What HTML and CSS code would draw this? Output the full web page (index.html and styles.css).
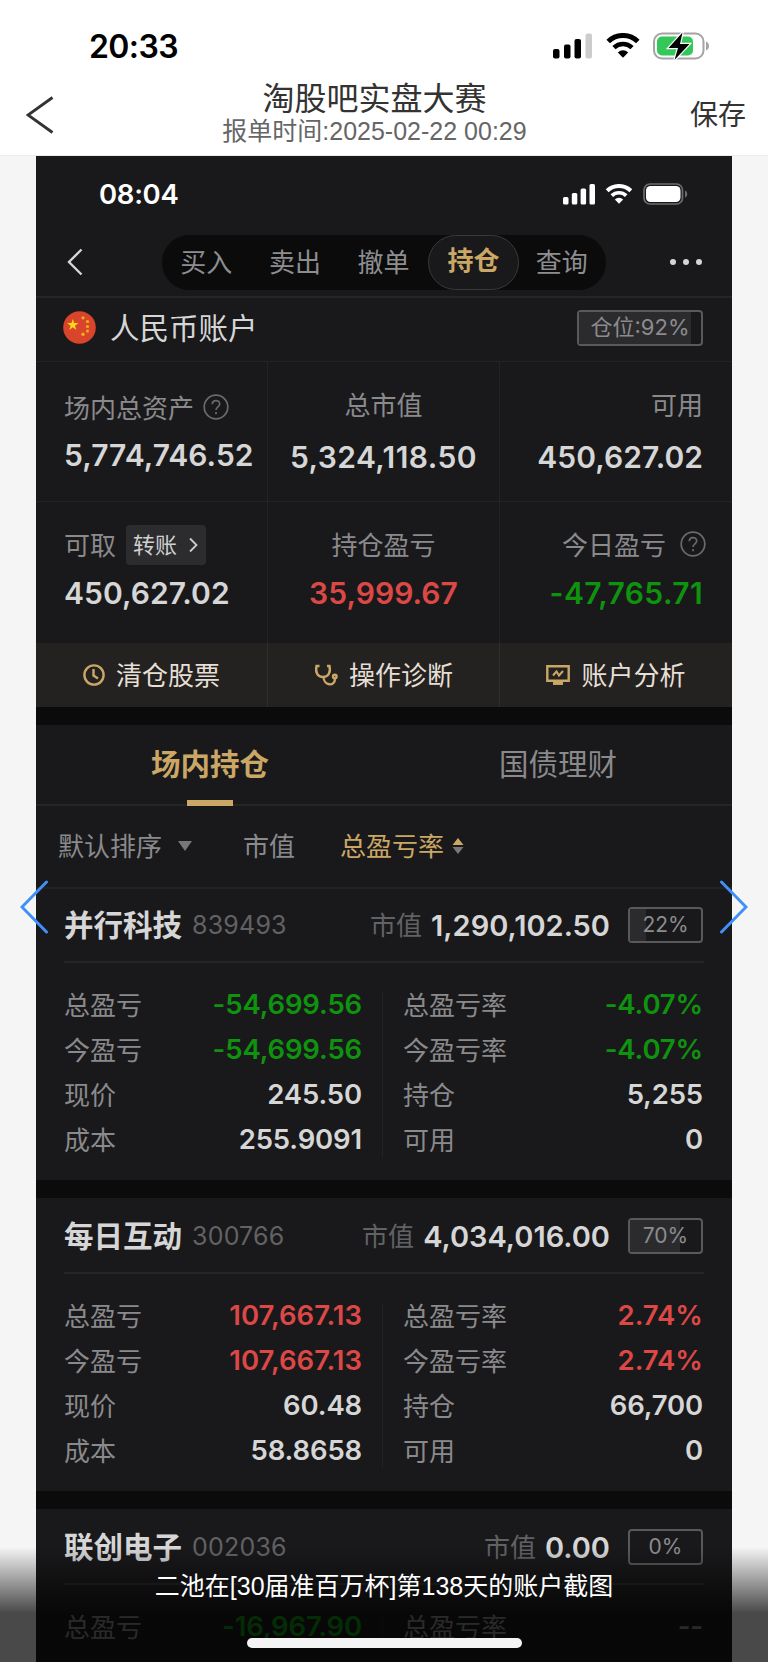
FILE: index.html
```html
<!DOCTYPE html>
<html lang="zh-CN">
<head>
  <meta charset="UTF-8" />
  <meta name="viewport" content="width=device-width, initial-scale=1.0"/>
  <title>淘股吧实盘大赛</title>
  <link rel="stylesheet" href="styles.css">
</head>
<body>
  <div class="status">
    <span class="time">20:33</span>
    <svg class="signal" width="39" height="26" viewBox="0 0 39 26">
      <rect x="0" y="16" width="6.5" height="9.5" rx="2"/>
      <rect x="11" y="11.500" width="6.500" height="14" rx="2"/>
      <rect x="21.500" y="6" width="6.500" height="19.500" rx="2"/>
      <rect x="32.500" y="0.500" width="6.500" height="25" rx="2" fill="#ccc"/>
    </svg>
    <svg class="wifi" width="34" height="25" viewBox="0 0 34 25">
      <path d="M2.200 8.500a21.200 21.200 0 0 1 29.600 0" fill="none" stroke="#000" stroke-width="5"/>
      <path d="M8 14.600a13 13 0 0 1 18 0" fill="none" stroke="#000" stroke-width="4.600"/>
      <path d="M17 24.800l-5.200-5.400a7.600 7.600 0 0 1 10.400 0z"/>
    </svg>
    <svg class="battery" width="57" height="28" viewBox="0 0 57 28">
      <rect x="1" y="1.500" width="49.500" height="25" rx="8" fill="#fff" stroke="#a4a4a4" stroke-width="2"/>
      <rect x="4" y="4.500" width="36" height="19" rx="5" fill="#34c759"/>
      <path d="M53 9.500c4 1.500 4 7.500 0 9z" fill="#a4a4a4"/>
      <path d="M29.500 0.500L15.500 16h9.500l-3.500 12L36.500 12H27z" fill="#000" stroke="#fff" stroke-width="2.400" paint-order="stroke"/>
    </svg>
  </div>

  <header class="header">
    <svg class="back" width="28" height="38" viewBox="0 0 28 38"><path d="M26.500 1.500L2 19l24.500 17.500" fill="none" stroke="#333" stroke-width="2.800"/></svg>
    <div class="titles">
      <h1>淘股吧实盘大赛</h1>
      <p>报单时间:2025-02-22 00:29</p>
    </div>
    <span class="save">保存</span>
  </header>

  <main class="shot">
    <div class="shot-status">
      <span class="time">08:04</span>
      <svg class="signal" width="32" height="21" viewBox="0 0 32 21" fill="#fff">
        <rect x="0" y="13" width="5.500" height="7.500" rx="1.500"/>
        <rect x="8.800" y="9" width="5.500" height="11.500" rx="1.500"/>
        <rect x="17.600" y="4.500" width="5.500" height="16" rx="1.500"/>
        <rect x="26.500" y="0" width="5.500" height="20.500" rx="1.500"/>
      </svg>
      <svg class="wifi" width="28" height="20" viewBox="0 0 34 25" fill="#fff">
        <path d="M2.200 8.500a21.200 21.200 0 0 1 29.600 0" fill="none" stroke="#fff" stroke-width="5"/>
        <path d="M8 14.600a13 13 0 0 1 18 0" fill="none" stroke="#fff" stroke-width="4.600"/>
        <path d="M17 24.800l-5.200-5.400a7.600 7.600 0 0 1 10.400 0z"/>
      </svg>
      <svg class="battery" width="45" height="22" viewBox="0 0 45 22">
        <rect x="1" y="1" width="38.500" height="20" rx="6" fill="none" stroke="#6c6c6e" stroke-width="1.700"/>
        <rect x="3" y="3" width="34.500" height="16" rx="4.500" fill="#fff"/>
        <path d="M42 7.500c3 1 3 6 0 7z" fill="#6c6c6e"/>
      </svg>
    </div>

    <nav class="nav">
      <svg class="nav-back" width="16" height="28" viewBox="0 0 16 28"><path d="M14.500 1.500L2 14l12.500 12.500" fill="none" stroke="#d6d6d6" stroke-width="2.400"/></svg>
      <div class="pills">
        <span>买入</span>
        <span>卖出</span>
        <span>撤单</span>
        <span class="active">持仓</span>
        <span>查询</span>
      </div>
      <div class="dots"><i></i><i></i><i></i></div>
    </nav>

    <section class="account">
      <svg width="33" height="33" viewBox="0 0 33 33">
        <circle cx="16.500" cy="16.500" r="16.300" fill="#d8452a"/>
        <path d="M9.800 8l1.350 4.100h4.350l-3.500 2.600 1.300 4.200-3.500-2.600-3.500 2.600 1.300-4.200-3.500-2.600h4.350z" fill="#ffd51c"/>
        <g fill="#f3ae1c"><circle cx="20" cy="6.800" r="1.600"/><circle cx="24.500" cy="10.500" r="1.600"/><circle cx="24.500" cy="15.500" r="1.600"/><circle cx="24.500" cy="20" r="1.500"/><circle cx="20" cy="23.300" r="1.700"/></g>
      </svg>
      <h2>人民币账户</h2>
      <span class="badge wide"><i style="width:92%"></i><b>仓位:92%</b></span>
    </section>

    <section class="summary">
      <div class="cell left">
        <p class="label low">场内总资产 <svg class="help" viewBox="0 0 26 26"><circle cx="13" cy="13" r="11.800"/><path d="M9.300 10.300c0-5 7.400-4.800 7.400-.4 0 3-3.700 3-3.700 6.200M13 18v2.300"/></svg></p>
        <p class="value up">5,774,746.52</p>
      </div>
      <div class="cell center">
        <p class="label">总市值</p>
        <p class="value wider">5,324,118.50</p>
      </div>
      <div class="cell right">
        <p class="label">可用</p>
        <p class="value">450,627.02</p>
      </div>
      <div class="cell left bottom">
        <p class="label">可取 <span class="transfer"><b>转账</b> <svg width="9" height="16" viewBox="0 0 9 16"><path d="M1 1.500L7.500 8 1 14.500" fill="none" stroke="#ccc" stroke-width="1.800"/></svg></span></p>
        <p class="value">450,627.02</p>
      </div>
      <div class="cell center bottom">
        <p class="label">持仓盈亏</p>
        <p class="value red">35,999.67</p>
      </div>
      <div class="cell right bottom">
        <p class="label">今日盈亏 <svg class="help end" viewBox="0 0 26 26"><circle cx="13" cy="13" r="11.800"/><path d="M9.300 10.300c0-5 7.400-4.800 7.400-.4 0 3-3.700 3-3.700 6.200M13 18v2.300"/></svg></p>
        <p class="value wider green">-47,765.71</p>
      </div>
    </section>

    <section class="actions">
      <div>
        <svg width="22" height="22" viewBox="0 0 22 22"><circle cx="11" cy="11" r="9.600"/><path d="M10.500 5v6.500l4.500 3"/></svg>
        <span>清仓股票</span>
      </div>
      <div>
        <svg width="24" height="22" viewBox="0 0 24 22"><path d="M5.500 2H2.500c-1.500 7 1.500 11 6.500 11s8-4 6.500-11H13M9.500 13c.5 9 11.500 10 11.500 1.500"/><circle cx="20.800" cy="12.500" r="1.800"/></svg>
        <span>操作诊断</span>
      </div>
      <div>
        <svg width="24" height="22" viewBox="0 0 24 22"><path d="M1.300 2.300h21.400v14.400H1.300z"/><path d="M7 11.500l3.500-4 2.500 4 4-4.500" stroke-width="2"/><path d="M7 19.200h10" stroke-width="3.500"/></svg>
        <span>账户分析</span>
      </div>
    </section>

    <section class="tabs">
      <span class="active">场内持仓</span>
      <span>国债理财</span>
    </section>

    <section class="sorts">
      <span>默认排序</span>
      <i class="caret"></i>
      <span class="by-value">市值</span>
      <span class="gold">总盈亏率</span>
      <svg width="12" height="18" viewBox="0 0 12 18"><path d="M6 1l5.500 7H.5z" fill="#cba766"/><path d="M6 17l5.500-7H.5z" fill="#77777a"/></svg>
    </section>

    <article class="stock">
      <div class="stock-head">
        <h3>并行科技</h3>
        <span class="code">839493</span>
        <span class="mv">市值</span>
        <strong>1,290,102.50</strong>
        <span class="badge"><i style="width:22%"></i><b>22%</b></span>
      </div>
      <div class="grid">
        <dl>
          <div><dt>总盈亏</dt><dd class="green">-54,699.56</dd></div>
          <div><dt>今盈亏</dt><dd class="green">-54,699.56</dd></div>
          <div><dt>现价</dt><dd>245.50</dd></div>
          <div><dt>成本</dt><dd>255.9091</dd></div>
        </dl>
        <dl>
          <div><dt>总盈亏率</dt><dd class="green">-4.07%</dd></div>
          <div><dt>今盈亏率</dt><dd class="green">-4.07%</dd></div>
          <div><dt>持仓</dt><dd>5,255</dd></div>
          <div><dt>可用</dt><dd>0</dd></div>
        </dl>
      </div>
    </article>

    <article class="stock">
      <div class="stock-head">
        <h3>每日互动</h3>
        <span class="code">300766</span>
        <span class="mv">市值</span>
        <strong>4,034,016.00</strong>
        <span class="badge"><i style="width:70%"></i><b>70%</b></span>
      </div>
      <div class="grid">
        <dl>
          <div><dt>总盈亏</dt><dd class="red">107,667.13</dd></div>
          <div><dt>今盈亏</dt><dd class="red">107,667.13</dd></div>
          <div><dt>现价</dt><dd>60.48</dd></div>
          <div><dt>成本</dt><dd>58.8658</dd></div>
        </dl>
        <dl>
          <div><dt>总盈亏率</dt><dd class="red">2.74%</dd></div>
          <div><dt>今盈亏率</dt><dd class="red">2.74%</dd></div>
          <div><dt>持仓</dt><dd>66,700</dd></div>
          <div><dt>可用</dt><dd>0</dd></div>
        </dl>
      </div>
    </article>

    <article class="stock">
      <div class="stock-head">
        <h3>联创电子</h3>
        <span class="code">002036</span>
        <span class="mv">市值</span>
        <strong>0.00</strong>
        <span class="badge"><b>0%</b></span>
      </div>
      <div class="grid">
        <dl>
          <div><dt>总盈亏</dt><dd class="green">-16,967.90</dd></div>
        </dl>
        <dl>
          <div><dt>总盈亏率</dt><dd class="muted">--</dd></div>
        </dl>
      </div>
    </article>
  </main>

  <!-- previous / next picture -->
  <svg class="arrow prev" width="28" height="54" viewBox="0 0 28 54"><path d="M26.500 2L2 27l24.500 25"/></svg>
  <svg class="arrow next" width="28" height="54" viewBox="0 0 28 54"><path d="M1.500 2L26 27 1.500 52"/></svg>

  <footer class="caption">
    <p>二池在[30届准百万杯]第138天的账户截图</p>
    <div class="home-bar"></div>
  </footer>
</body>
</html>
```

FILE: styles.css
```css
* {
  box-sizing: border-box;
  margin: 0;
  padding: 0;
}

body {
  position: relative;
  width: 768px;
  height: 1662px;
  overflow: hidden;
  background: #f5f5f5;
  font-family: Inter, 'Noto Sans CJK SC', sans-serif;
  color: #333;
}

i { font-style: normal; }
svg { flex: none; display: block; }

/* phone status bar */
.status {
  display: flex;
  align-items: center;
  height: 76px;
  padding: 15px 58px 0 89px;
  background: #fff;
}

.status .time {
  margin-right: auto;
  padding-top: 1px;
  font-size: 32px;
  font-weight: 600;
  letter-spacing: -0.6px;
  color: #000;
}

.status .wifi { margin: 0 13px 0 14px; }

.header {
  display: flex;
  align-items: center;
  justify-content: space-between;
  height: 80px;
  padding: 0 22px 2px 26px;
  background: #fff;
  border-bottom: 1px solid #ececec;
}

.titles {
  padding: 0 0 7px 5px;
  text-align: center;
}

.titles h1 {
  font-size: 32px;
  font-weight: 400;
  line-height: 40px;
}

.titles p {
  font-family: 'Liberation Sans', 'Noto Sans CJK SC', sans-serif;
  font-size: 25px;
  line-height: 25px;
  color: #666;
}

.save {
  padding-bottom: 4px;
  font-size: 28px;
}

/* trading app */
.shot {
  width: 696px;
  height: 1506px;
  margin-left: 36px;
  overflow: hidden;
  background: #19191b;
  color: #d6d6d6;
}

.shot-status {
  display: flex;
  align-items: center;
  height: 76px;
  padding: 0 44px 0 63px;
}

.shot-status .time {
  margin-right: auto;
  font-size: 27.5px;
  font-weight: 600;
  letter-spacing: -0.3px;
  color: #fff;
}

.shot-status .wifi { margin: 0 10px; }

.nav {
  display: flex;
  align-items: center;
  height: 66px;
  padding: 0 30px 4px 31px;
  border-bottom: 2px solid #252527;
}

.pills {
  display: flex;
  align-items: center;
  width: 444px;
  height: 55px;
  margin-left: 79px;
  border-radius: 28px;
  background: #0b0b0b;
  font-size: 26px;
  color: #8e8e90;
}

.pills span {
  width: 89px;
  padding-bottom: 4px;
  text-align: center;
}

.pills .active {
  width: 92px;
  height: 55px;
  margin: 0 -2px 0 0;
  padding: 0;
  border: 1.500px solid #39393b;
  border-radius: 28px;
  background: #19191b;
  line-height: 49px;
  font-weight: 700;
}

.pills .active, .gold, .tabs .active { color: #cba766; }

.dots {
  display: flex;
  gap: 7px;
  margin-left: auto;
}

.dots i {
  width: 6px;
  height: 6px;
  border-radius: 50%;
  background: #d6d6d6;
}

.account {
  display: flex;
  align-items: center;
  height: 63px;
  padding: 0 29px 4px 27px;
}

.account h2 {
  margin: 0 auto 0 14px;
  padding-bottom: 3px;
  font-size: 29.500px;
  font-weight: 400;
}

.badge {
  position: relative;
  flex: none;
  width: 75px;
  height: 36px;
  border: 2px solid #59595b;
  border-radius: 4px;
  font-size: 21px;
  line-height: 32px;
  text-align: center;
  color: #8c8c8e;
}

.badge.wide {
  width: 126px;
  font-size: 22px;
  line-height: 30px;
}

/* filled part of the position badge */
.badge i {
  position: absolute;
  inset: 0 auto 0 0;
  background: #2b2b2d;
}

.badge b {
  position: relative;
  font-weight: 400;
}

.summary {
  display: grid;
  grid-template-columns: 232px 232px 232px;
  grid-template-rows: 140px 142px;
}

.cell {
  padding: 22px 29px 0 28px;
  border-top: 1.500px solid #232325;
  border-right: 1.500px solid #232325;
}

.cell:nth-child(3n) { border-right: none; }

.label {
  display: flex;
  align-items: center;
  height: 38px;
  font-size: 26px;
  white-space: nowrap;
  color: #8a8a8c;
}

.label.low { padding-top: 6px; }

.help {
  width: 26px;
  height: 26px;
  margin: 2px 0 0 9px;
  fill: none;
  stroke: #6a6a6c;
  stroke-width: 1.700;
}

.help.end { margin: 2px -3px 0 14px; }

.value {
  margin-top: 15px;
  font-size: 30px;
  line-height: 40px;
  font-weight: 600;
  letter-spacing: 0.05px;
}

.value.up { margin-top: 13px; }
.value.wider { letter-spacing: 0.4px; }
.bottom .value { margin-top: 11px; }

.center { padding: 22px 0 0; text-align: center; }
.center .label { justify-content: center; }
.right { text-align: right; }
.right .label { justify-content: flex-end; }

.transfer {
  display: flex;
  align-items: center;
  justify-content: space-between;
  width: 80px;
  height: 40px;
  margin: 3px 0 0 10px;
  padding: 0 8px 0 7px;
  border-radius: 4px;
  background: #2c2c2e;
  font-size: 22px;
  color: #d0d0d0;
}

.transfer b {
  padding-bottom: 4px;
  font-weight: 400;
}

.red { color: #dc4845; }
.green { color: #0f930f; }

.actions {
  display: grid;
  grid-template-columns: 232px 232px 232px;
  height: 64px;
  background: #242220;
}

.actions div {
  display: flex;
  align-items: center;
  justify-content: center;
  gap: 11px;
  border-right: 1.500px solid #302e2c;
  font-size: 26px;
  color: #e6dfd5;
}

.actions div:last-child { border-right: none; }
.actions span { padding-bottom: 4px; }

.actions svg {
  fill: none;
  stroke: #cba766;
  stroke-width: 2.400;
}

.tabs {
  display: grid;
  grid-template-columns: 1fr 1fr;
  height: 99px;
  border-top: 18px solid #0b0b0b;
  border-bottom: 2px solid #252527;
  font-size: 29.500px;
  text-align: center;
  line-height: 79px;
  color: #8a8a8c;
}

.tabs .active {
  position: relative;
  font-weight: 700;
}

.tabs .active::after {
  content: '';
  position: absolute;
  left: 151px;
  bottom: -2px;
  width: 46px;
  height: 6px;
  background: #cba766;
}

.sorts {
  display: flex;
  align-items: center;
  height: 83px;
  padding: 0 22px 1px;
  border-bottom: 2px solid #232325;
  font-size: 26px;
  color: #8a8a8c;
}

.sorts span { padding-bottom: 3px; }

.caret {
  margin: 0 51px 0 16px;
  border: 7.500px solid transparent;
  border-top: 10px solid #77777a;
  border-bottom: none;
}

.sorts .by-value { margin-right: 45px; }

.sorts svg { margin-left: 8px; }

.stock {
  height: 311px;
  padding: 0 28px;
  border-bottom: 18px solid #0b0b0b;
}

/* the sort row's border sits above the first card */
.sorts + .stock { height: 309px; }
.sorts + .stock .stock-head { height: 74px; padding-top: 0; }

.stock-head {
  display: flex;
  align-items: center;
  height: 76px;
  padding-top: 2px;
  padding-right: 1px;
  border-bottom: 2px solid #252527;
}

.stock-head h3 {
  padding-bottom: 4px;
  font-size: 29.500px;
  font-weight: 700;
}

.code {
  margin: 0 auto 0 10px;
  font-size: 25px;
  letter-spacing: 0.2px;
  color: #626264;
}

.mv {
  padding-bottom: 4px;
  font-size: 26px;
  color: #626264;
}

.stock-head strong {
  margin: 0 18px 0 9px;
  font-size: 29px;
  font-weight: 600;
}

.grid {
  display: grid;
  grid-template-columns: 318px 322px;
  margin-top: 19px;
}

.grid dl:first-child { padding-right: 20px; }

.grid dl:last-child {
  padding: 0 1px 0 21px;
  background: linear-gradient(#232325, #232325) 0 11px / 1px 164px no-repeat;
}

.grid dl div {
  display: flex;
  align-items: center;
  justify-content: space-between;
  height: 45px;
}

dt {
  padding-bottom: 3px;
  font-size: 26px;
  color: #8a8a8c;
}

dd {
  padding-bottom: 1px;
  font-size: 27.500px;
  font-weight: 600;
  letter-spacing: -0.15px;
}

dd.red { letter-spacing: 0; }

.muted { color: #8a8a8c; }

.arrow {
  position: absolute;
  top: 880px;
  fill: none;
  stroke: #3f91f7;
  stroke-width: 3;
  stroke-linecap: round;
}

.prev { left: 20px; }
.next { right: 20px; }

.caption {
  position: absolute;
  left: 0;
  right: 0;
  bottom: 0;
  height: 115px;
  padding-top: 21px;
  background: linear-gradient(rgba(0,0,0,0), rgba(0,0,0,.7) 66px);
  text-align: center;
  font-family: 'Liberation Sans', 'Noto Sans CJK SC', sans-serif;
  font-size: 25px;
  line-height: 37px;
  color: #fff;
}

.home-bar {
  width: 275px;
  height: 10px;
  margin: 33px auto 0;
  border-radius: 5px;
  background: #f4f4f4;
}
```
